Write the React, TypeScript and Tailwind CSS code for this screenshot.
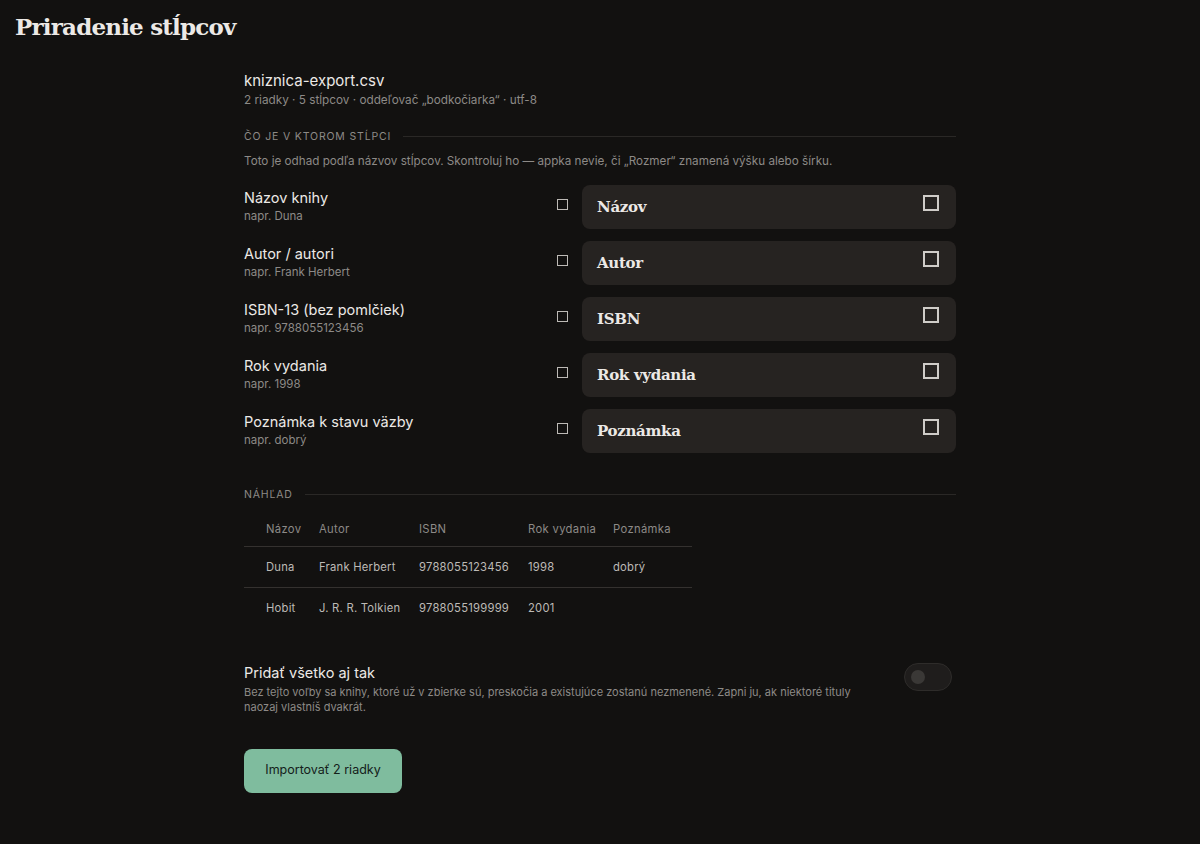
import React from "react";

const fields = [
  { label: "Názov knihy", example: "napr. Duna", value: "Názov" },
  { label: "Autor / autori", example: "napr. Frank Herbert", value: "Autor" },
  { label: "ISBN-13 (bez pomlčiek)", example: "napr. 9788055123456", value: "ISBN" },
  { label: "Rok vydania", example: "napr. 1998", value: "Rok vydania" },
  { label: "Poznámka k stavu väzby", example: "napr. dobrý", value: "Poznámka" },
];

const rows = [
  ["Duna", "Frank Herbert", "9788055123456", "1998", "dobrý"],
  ["Hobit", "J. R. R. Tolkien", "9788055199999", "2001", ""],
];

const headers = ["Názov", "Autor", "ISBN", "Rok vydania", "Poznámka"];
const colWidths = ["w-[75px]", "w-[100px]", "w-[109px]", "w-[85px]", "w-[79px]"];

function SectionTitle({ children }: { children: React.ReactNode }) {
  return (
    <div className="flex items-center gap-3">
      <span className="text-[10.5px] tracking-[0.08em] uppercase text-[#8d8a87]">{children}</span>
      <div className="h-px flex-1 bg-[#2a2826]" />
    </div>
  );
}

export default function App() {
  return (
    <div
      className="min-h-[844px] w-full bg-[#121110] text-[#ece9e6]"
      style={{ fontFamily: "Inter, 'Noto Sans', sans-serif" }}
    >
      <h1
        className="pl-[15px] pt-[10px] text-[23px] font-bold leading-[34px] text-[#ece9e6]"
        style={{ fontFamily: "'DejaVu Serif', 'Liberation Serif', serif", letterSpacing: "-0.035em" }}
      >
        Priradenie stĺpcov
      </h1>

      <div className="ml-[244px] w-[712px] pt-[27px]">
        <div className="text-[15px] leading-[20px] text-[#ece9e6]">kniznica-export.csv</div>
        <div className="mt-[1px] text-[11.75px] leading-[16px] text-[#8d8a87]">
          2 riadky · 5 stĺpcov · oddeľovač „bodkočiarka“ · utf-8
        </div>

        <div className="mt-[21px]">
          <SectionTitle>Čo je v ktorom stĺpci</SectionTitle>
        </div>
        <p className="mt-[8px] text-[11.7px] leading-[16px] text-[#8d8a87]">
          Toto je odhad podľa názvov stĺpcov. Skontroluj ho — appka nevie, či „Rozmer“ znamená výšku alebo šírku.
        </p>

        <div className="mt-[16px] flex flex-col gap-[12px]">
          {fields.map((f) => (
            <div key={f.label} className="flex h-[44px] items-start">
              <div className="flex-1 pt-[4px]">
                <div className="text-[14.5px] leading-[18px] text-[#ece9e6]">{f.label}</div>
                <div className="mt-[2px] text-[11.5px] leading-[15px] text-[#8d8a87]">{f.example}</div>
              </div>
              <div className="mr-[14px] mt-[14px] h-[11px] w-[11px] border-[1.5px] border-[#bdbab6]" />
              <div className="flex h-[44px] w-[374px] items-center justify-between rounded-[8px] bg-[#262321] pl-[15px] pr-[17px]">
                <span
                  className="text-[15px] font-bold text-[#ece9e6]"
                  style={{ fontFamily: "'DejaVu Serif', 'Liberation Serif', serif", letterSpacing: "-0.02em" }}
                >
                  {f.value}
                </span>
                <div className="-mt-[8px] h-[16px] w-[16px] border-2 border-[#cfccc8]" />
              </div>
            </div>
          ))}
        </div>

        <div className="mt-[34px]">
          <SectionTitle>Náhľad</SectionTitle>
        </div>

        <table className="mt-[10px] w-[448px] table-fixed border-collapse text-[11.25px]">
          <thead>
            <tr className="border-b border-[#34312f]">
              {headers.map((h, i) => (
                <th
                  key={h}
                  className={`h-[34px] text-left font-normal tracking-[0.03em] text-[#8d8a87] ${colWidths[i]} ${i === 0 ? "pl-[22px]" : "pl-0"}`}
                >
                  {h}
                </th>
              ))}
            </tr>
          </thead>
          <tbody>
            {rows.map((r, ri) => (
              <tr key={ri} className={ri === 0 ? "border-b border-[#34312f]" : ""}>
                {r.map((c, i) => (
                  <td
                    key={i}
                    className={`h-[41px] text-left tracking-[0.02em] text-[#bdbab6] ${i === 0 ? "pl-[22px]" : "pl-0"}`}
                  >
                    {c}
                  </td>
                ))}
              </tr>
            ))}
          </tbody>
        </table>

        <div className="mt-[35px] flex items-start justify-between">
          <div className="w-[640px]">
            <div className="text-[14.5px] leading-[18px] text-[#ece9e6]">Pridať všetko aj tak</div>
            <p className="mt-[3px] text-[11px] leading-[15px] text-[#8d8a87]">
              Bez tejto voľby sa knihy, ktoré už v zbierke sú, preskočia a existujúce zostanú nezmenené. Zapni ju, ak niektoré tituly naozaj vlastníš dvakrát.
            </p>
          </div>
          <div className="mr-[4px] -mt-[1px] flex h-[28px] w-[48px] items-center rounded-full border border-[#2e2c2a] bg-[#1f1d1c] pl-[6px]">
            <div className="h-[14px] w-[14px] rounded-full bg-[#3a3836]" />
          </div>
        </div>

        <button className="mt-[34px] h-[44px] w-[158px] rounded-[8px] bg-[#7fbc9e] text-[12.5px] text-[#14201a]">
          Importovať 2 riadky
        </button>
      </div>
    </div>
  );
}
